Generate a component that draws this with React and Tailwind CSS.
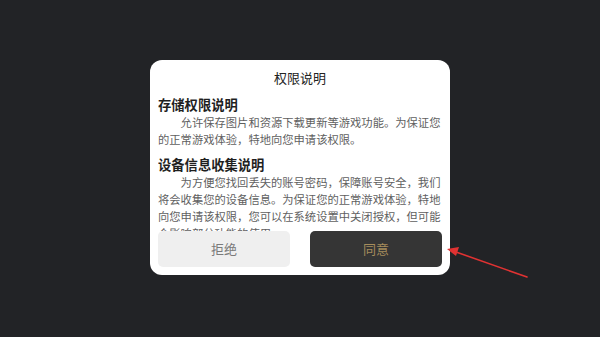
import React from 'react';

const sections = [
  {
    title: '存储权限说明',
    body: '允许保存图片和资源下载更新等游戏功能。为保证您的正常游戏体验，特地向您申请该权限。',
  },
  {
    title: '设备信息收集说明',
    body: '为方便您找回丢失的账号密码，保障账号安全，我们将会收集您的设备信息。为保证您的正常游戏体验，特地向您申请该权限，您可以在系统设置中关闭授权，但可能会影响部分功能的使用。',
  },
];

const App = () => {
  return (
    <div className="relative w-[600px] h-[337px] bg-[#222326] flex justify-center pt-[60px] overflow-hidden font-['Noto_Sans_CJK_SC','Noto_Sans',sans-serif]">
      {/* Dialog */}
      <div className="w-[300px] h-[215px] bg-white rounded-[12px] flex flex-col px-2 pb-2">
        <div className="h-[36px] leading-[36px] text-center text-[13px] text-[#222]">权限说明</div>

        <div className="flex-1 overflow-hidden">
          {sections.map((s, i) => (
            <div key={i} className={i > 0 ? 'mt-2' : ''}>
              <h3 className="text-[13.3px] leading-[18px] font-bold text-[#1f1f1f]">{s.title}</h3>
              <p className="text-[11.3px] leading-[17px] text-[#5f5f5f] indent-[2em]">{s.body}</p>
            </div>
          ))}
        </div>

        <div className="flex justify-between">
          <button className="w-[132px] h-[36px] rounded-[5px] bg-[#efefef] text-[13px] text-[#7a7a7a]">
            拒绝
          </button>
          <button className="w-[132px] h-[36px] rounded-[5px] bg-[#353535] text-[13px] text-[#a58c5c]">
            同意
          </button>
        </div>
      </div>

      {/* Annotation arrow */}
      <svg className="absolute left-0 top-0" width="600" height="337" viewBox="0 0 600 337">
        <line x1="527" y1="277" x2="456" y2="252" stroke="#e03232" strokeWidth="1.6" strokeLinecap="round" />
        <polygon points="447,249 459,247 456,256" fill="#e03232" />
      </svg>
    </div>
  );
};

export default App;
